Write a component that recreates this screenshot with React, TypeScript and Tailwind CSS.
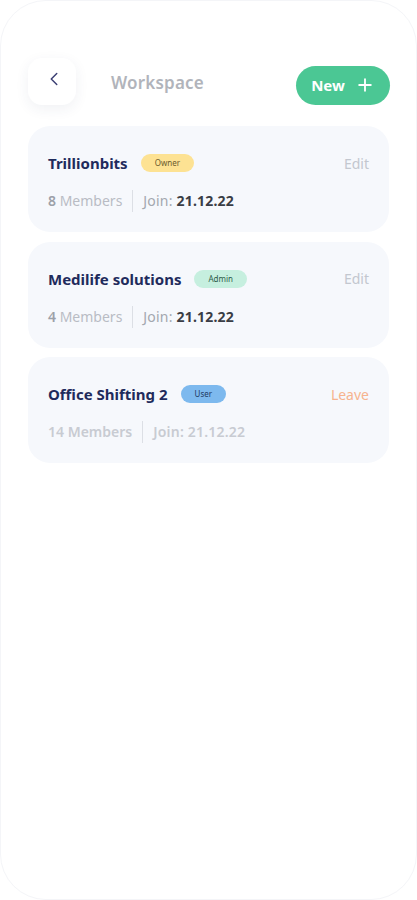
import { ChevronLeft, Plus } from 'lucide-react'

type Workspace = {
  name: string
  role: 'Owner' | 'Admin' | 'User'
  members: number
  joined: string
  action: 'Edit' | 'Leave'
}

const workspaces: Workspace[] = [
  { name: 'Trillionbits', role: 'Owner', members: 8, joined: '21.12.22', action: 'Edit' },
  { name: 'Medilife solutions', role: 'Admin', members: 4, joined: '21.12.22', action: 'Edit' },
  { name: 'Office Shifting 2', role: 'User', members: 14, joined: '21.12.22', action: 'Leave' },
]

const badgeStyles = {
  Owner: 'bg-[#fde293] text-[#6b5a2c]',
  Admin: 'bg-[#c6efdf] text-[#2c5a48]',
  User: 'bg-[#7db9ee] text-[#1f3a63]',
}

function WorkspaceCard({ ws }: { ws: Workspace }) {
  const faded = ws.action === 'Leave'
  return (
    <div className="bg-[#f6f8fc] rounded-[22px] px-5 pt-[27px] pb-5">
      <div className="flex items-center h-5">
        <h2 className="text-[15px] font-bold text-[#1f2b5c] leading-5">{ws.name}</h2>
        <span className={`ml-[13px] h-[18px] px-[14px] rounded-full text-[8px] leading-[18px] ${badgeStyles[ws.role]}`}>
          {ws.role}
        </span>
        <button className={`ml-auto text-[14px] ${faded ? 'text-[#f6b38e]' : 'text-[#c3c7cf]'}`}>
          {ws.action}
        </button>
      </div>
      <div className="flex items-center h-[22px] mt-[17px] text-[14px] leading-5">
        <span className={faded ? 'text-[#c8cbd2] font-semibold' : 'text-[#9ca0a8] font-semibold'}>
          {ws.members}
          <span className={faded ? 'font-semibold' : 'font-normal text-[#b9bcc4]'}> Members</span>
        </span>
        <span className="mx-[10px] h-[22px] w-px bg-[#dcdfe5]" />
        <span className={faded ? 'text-[#c8cbd2] font-semibold tracking-[0.2px]' : 'text-[#a3a7af] tracking-[0.2px]'}>
          Join: <span className={faded ? '' : 'font-bold text-[#3a3d45]'}>{ws.joined}</span>
        </span>
      </div>
    </div>
  )
}

export default function App() {
  return (
    <div className="min-h-[900px] bg-white" style={{ fontFamily: '"Noto Sans", "Open Sans", sans-serif' }}>
      <div className="h-[900px] rounded-[46px] border border-[#f4f5f8] px-[27px] pt-[57px]">
        {/* Header */}
        <div className="flex items-center">
          <button className="w-[48px] h-[47px] flex items-center justify-center rounded-[14px] bg-white shadow-[0_4px_14px_rgba(40,50,100,0.07)]">
            <ChevronLeft size={22} strokeWidth={1.6} className="text-[#3b3f73] ml-[3px] -mt-[5px]" />
          </button>
          <h1 className="ml-[35px] mt-[2px] text-[17px] font-semibold text-[#b1b4bb] tracking-[0.2px]">Workspace</h1>
          <button className="ml-auto mr-[-1px] mt-[7px] h-[39px] w-[94px] flex items-center justify-center gap-[10px] rounded-full bg-[#4bc794] text-white">
            <span className="text-[15px] font-bold">New</span>
            <Plus size={20} strokeWidth={2.2} />
          </button>
        </div>

        {/* Workspace list */}
        <div className="mt-[21px] flex flex-col gap-[9.5px]">
          {workspaces.map(ws => (
            <WorkspaceCard key={ws.name} ws={ws} />
          ))}
        </div>
      </div>
    </div>
  )
}
